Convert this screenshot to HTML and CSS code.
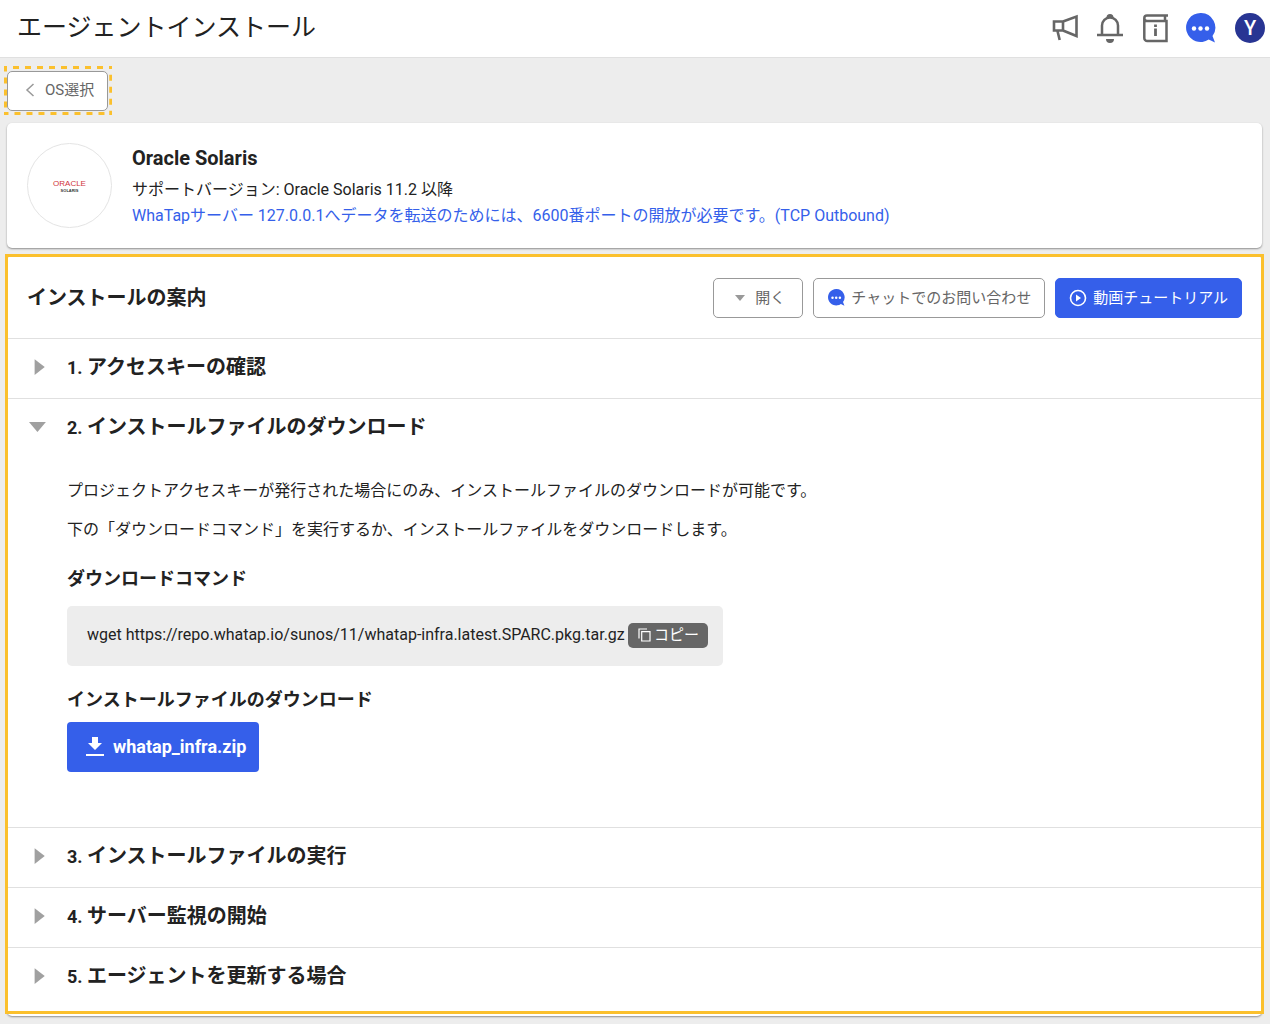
FILE: index.html
```html
<!DOCTYPE html>
<html lang="ja">
<head>
<meta charset="utf-8">
<meta name="viewport" content="width=device-width, initial-scale=1">
<title>エージェントインストール</title>
<link rel="stylesheet" href="styles.css">
</head>
<body>
<svg class="sprite" aria-hidden="true">
  <symbol id="chat" viewBox="0 0 30 30">
    <path fill="#355fea" d="M14.500 0a14.500 14.500 0 1 0 8.200 26.500L29 29.500 26.500 23A14.500 14.500 0 0 0 14.500 0z"/>
    <g fill="#fff"><circle cx="8" cy="15.500" r="2.200"/><circle cx="14.500" cy="15.500" r="2.200"/><circle cx="21" cy="15.500" r="2.200"/></g>
  </symbol>
</svg>
<header class="topbar">
  <h1 class="title">エージェントインストール</h1>
  <nav class="tools" aria-label="ツール">
    <button class="tool" aria-label="お知らせ">
      <svg width="30" height="30" viewBox="0 0 30 30" fill="none" stroke="#666" stroke-width="2.600"><path d="M3 8.500h9v9H3zM12 8.500L25.500 3.500v19.500L12 17.500M6.500 18l2.200 9"/></svg>
    </button>
    <button class="tool" aria-label="通知">
      <svg width="30" height="30" viewBox="0 0 30 30" fill="none" stroke="#666" stroke-width="2.500"><path d="M1 22h26M6 21.500V12.500a8 8 0 0 1 16 0v9"/><path fill="#666" stroke="none" d="M10.500 4.500a3.500 3.500 0 0 1 7 0zM10 26h8a4 4 0 0 1-8 0z"/></svg>
    </button>
    <button class="tool" aria-label="ガイド">
      <svg width="30" height="30" viewBox="0 0 30 30" fill="none" stroke="#666" stroke-width="2.500"><path d="M27 2.500H6a2.700 2.700 0 0 0-2.700 2.700V25a3 3 0 0 0 3 3H25.500V8H6a2.700 2.700 0 0 1-2.700-2.700M24 3v4.500"/><path stroke-width="2.800" d="M14.500 11.500v2.500M14.500 15.500v7.500"/></svg>
    </button>
    <button class="tool" aria-label="チャット"><svg width="30" height="30"><use href="#chat"/></svg></button>
    <button class="avatar" aria-label="アカウント">Y</button>
  </nav>
</header>
<main class="page">
  <div class="back-mark">
    <button class="btn back">
      <svg width="10" height="16" viewBox="0 0 10 16" fill="none" stroke="#999" stroke-width="1.500"><path d="M8.500 2L2 8l6.500 6"/></svg>
      OS選択
    </button>
    <svg class="dashes" aria-hidden="true"><rect width="100%" height="100%"/></svg>
  </div>
  <section class="card product">
    <svg class="logo" width="85" height="85" viewBox="0 0 85 85" role="img" aria-label="Oracle Solaris">
      <circle cx="42.500" cy="42.500" r="42" fill="#fff" stroke="#e4e4e4"/>
      <text class="logo-name" x="42.500" y="43" text-anchor="middle">ORACLE</text>
      <text class="logo-sub" x="42.500" y="49" text-anchor="middle">SOLARIS</text>
    </svg>
    <div>
      <h2 class="name">Oracle Solaris</h2>
      <p class="info">サポートバージョン: Oracle Solaris 11.2 以降</p>
      <p class="info note">WhaTapサーバー 127.0.0.1へデータを転送のためには、6600番ポートの開放が必要です。(TCP Outbound)</p>
    </div>
  </section>
  <section class="card guide">
    <div class="guide-head">
      <h2 class="guide-title">インストールの案内</h2>
      <div class="actions">
        <button class="btn open"><svg width="10" height="6" viewBox="0 0 10 6"><path fill="#999" d="M0 0h10L5 6z"/></svg>開く</button>
        <button class="btn"><svg width="17" height="17"><use href="#chat"/></svg>チャットでのお問い合わせ</button>
        <button class="btn primary"><svg width="18" height="18" viewBox="0 0 18 18"><circle cx="9" cy="9" r="7.500" fill="none" stroke="#fff" stroke-width="1.600"/><path fill="#fff" d="M7 5.500l5 3.500-5 3.500z"/></svg>動画チュートリアル</button>
      </div>
    </div>
    <details class="step">
      <summary><svg class="arrow" viewBox="0 0 16 16"><path d="M5 1l9 7-9 7z"/></svg><span class="num">1.</span>アクセスキーの確認</summary>
    </details>
    <details class="step" open>
      <summary><svg class="arrow" viewBox="0 0 16 16"><path d="M0 3.500h15l-7.500 9z"/></svg><span class="num">2.</span>インストールファイルのダウンロード</summary>
      <div class="body">
        <p class="text">プロジェクトアクセスキーが発行された場合にのみ、インストールファイルのダウンロードが可能です。</p>
        <p class="text">下の「ダウンロードコマンド」を実行するか、インストールファイルをダウンロードします。</p>
        <h3 class="sub">ダウンロードコマンド</h3>
        <div class="command">
          <code>wget https://repo.whatap.io/sunos/11/whatap-infra.latest.SPARC.pkg.tar.gz</code>
          <button class="copy"><svg width="13" height="14" viewBox="0 0 13 14" fill="none" stroke="#fff" stroke-width="1.200"><path d="M1 10.500V1h8M3.700 3.700H12V13H3.700z"/></svg>コピー</button>
        </div>
        <h3 class="sub">インストールファイルのダウンロード</h3>
        <a class="download" href="#download"><svg width="20" height="20" viewBox="0 0 20 20" fill="#fff"><path d="M7 0h6v6h4l-7 7-7-7h4zM1 17h18v2H1z"/></svg>whatap_infra.zip</a>
      </div>
    </details>
    <details class="step">
      <summary><svg class="arrow" viewBox="0 0 16 16"><path d="M5 1l9 7-9 7z"/></svg><span class="num">3.</span>インストールファイルの実行</summary>
    </details>
    <details class="step">
      <summary><svg class="arrow" viewBox="0 0 16 16"><path d="M5 1l9 7-9 7z"/></svg><span class="num">4.</span>サーバー監視の開始</summary>
    </details>
    <details class="step">
      <summary><svg class="arrow" viewBox="0 0 16 16"><path d="M5 1l9 7-9 7z"/></svg><span class="num">5.</span>エージェントを更新する場合</summary>
    </details>
  </section>
</main>
</body>
</html>
```
FILE: styles.css
```css
* { box-sizing: border-box; }

body {
  margin: 0;
  background: #ededed;
  color: #222;
  font: 400 16px/26px Roboto, "Noto Sans CJK JP", sans-serif;
}

h1, h2, h3, p { margin: 0; }

button {
  font: inherit;
  padding: 0;
  border: 0;
  background: none;
  cursor: pointer;
}

svg { display: block; flex: none; }

.sprite { position: absolute; width: 0; height: 0; }

.topbar {
  display: flex;
  align-items: center;
  justify-content: space-between;
  height: 58px;
  padding: 0 5px 2px 17px;
  background: #fff;
  border-bottom: 1px solid #e0e0e0;
}

.title { font-size: 25px; font-weight: 400; line-height: 36px; }

.tools { display: flex; align-items: center; gap: 15px; }

.avatar {
  width: 30px;
  height: 30px;
  margin-left: 4px;
  border-radius: 50%;
  background: #283593;
  color: #fff;
  font-size: 20px;
  font-weight: 500;
  line-height: 30px;
}

.page { padding: 13px 8px 8px 7px; }

.back-mark { position: relative; width: fit-content; }

.dashes {
  position: absolute;
  top: -5px;
  left: -3px;
  width: calc(100% + 7px);
  height: calc(100% + 9px);
  pointer-events: none;
}

.dashes rect {
  fill: none;
  stroke: #fbc02d;
  stroke-width: 6px;
  stroke-dasharray: 6px 6px;
  stroke-dashoffset: 3px;
}

.btn {
  display: flex;
  align-items: center;
  justify-content: center;
  gap: 6px;
  height: 40px;
  padding: 0 13px 1px 14px;
  background: #fff;
  border: 1px solid #999;
  border-radius: 5px;
  color: #666;
  font-size: 15px;
}

.back { gap: 10px; padding: 0 13px 2px 17px; }

.card {
  background: #fff;
  border-radius: 5px;
  box-shadow: 0 1px 2px rgba(0, 0, 0, 0.4);
}

.product {
  display: flex;
  align-items: flex-start;
  gap: 20px;
  margin-top: 12px;
  padding: 20px 20px 19px;
}

.logo-name { font: 400 8px "Liberation Sans", sans-serif; fill: #d0343c; }
.logo-sub { font: 700 4px "Liberation Sans", sans-serif; fill: #333; }

.name { margin-bottom: 4px; font-size: 20px; font-weight: 700; line-height: 30px; }

.note { color: #355fea; }

.guide { position: relative; margin-top: 8px; padding-bottom: 9px; }

.guide::after {
  content: "";
  position: absolute;
  inset: -2px -2px 2px;
  border: 3px solid #fbc02d;
  pointer-events: none;
}

.guide-head {
  display: flex;
  align-items: center;
  justify-content: space-between;
  height: 82px;
  padding: 2px 20px 0;
}

.guide-title { font-size: 20px; font-weight: 700; }

.actions { display: flex; gap: 10px; }

.open { gap: 10px; padding: 0 17px 1px 21px; }

.primary { padding-left: 13px; background: #355fea; border-color: #355fea; color: #fff; }

.step { border-top: 1px solid #e0e0e0; }

.step summary {
  display: flex;
  align-items: baseline;
  height: 59px;
  padding: 13px 22px 16px;
  font-size: 20px;
  font-weight: 700;
  line-height: 30px;
  list-style: none;
  cursor: pointer;
}

.num { width: 20px; font-size: 18px; }

.arrow {
  align-self: center;
  width: 18px;
  height: 18px;
  margin-right: 20px;
  fill: #a0a0a0;
}

.body { padding: 20px 60px 55px; }

.text { margin-bottom: 13px; }

.sub { margin-top: 23px; font-size: 18px; font-weight: 700; }

.command {
  position: relative;
  display: flex;
  align-items: center;
  max-width: 656px;
  height: 60px;
  margin-top: 14px;
  padding: 0 20px 2px;
  background: #ededed;
  border-radius: 5px;
}

.command code { font-family: inherit; white-space: nowrap; }

.copy {
  position: absolute;
  right: 15px;
  top: 17px;
  display: flex;
  align-items: center;
  gap: 3px;
  height: 25px;
  padding: 0 9px 1px 10px;
  background: #666;
  border-radius: 5px;
  color: #fff;
  font-size: 15px;
}

.command + .sub { margin-top: 21px; }

.download {
  display: flex;
  align-items: center;
  gap: 8px;
  width: fit-content;
  height: 50px;
  margin-top: 9px;
  padding: 0 13px 1px 18px;
  background: #355fea;
  border-radius: 4px;
  color: #fff;
  font-size: 18px;
  font-weight: 700;
  text-decoration: none;
}
```
